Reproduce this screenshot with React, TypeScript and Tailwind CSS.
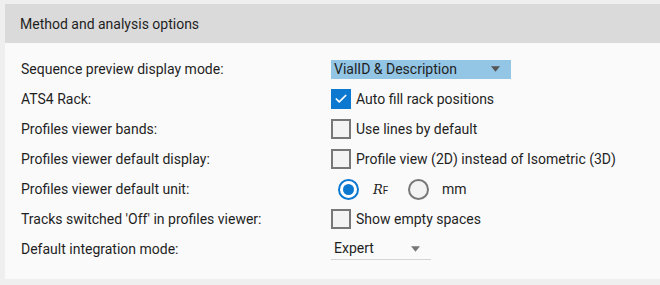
import { Check } from "lucide-react"

type Row = { label: string; control: React.ReactNode }

function Checkbox({ checked, label }: { checked?: boolean; label: string }) {
  return (
    <div className="flex items-center gap-[5px]">
      {checked ? (
        <span className="flex h-[20px] w-[20px] items-center justify-center bg-[#0c78cf]">
          <Check className="h-[14px] w-[14px] text-white" strokeWidth={3} />
        </span>
      ) : (
        <span className="h-[20px] w-[20px] border-2 border-[#777777] bg-[#f3f3f3]" />
      )}
      <span>{label}</span>
    </div>
  )
}

function Radio({ checked }: { checked?: boolean }) {
  return checked ? (
    <span className="flex h-[21px] w-[21px] items-center justify-center rounded-full border-2 border-[#0c78cf] bg-white">
      <span className="h-[11px] w-[11px] rounded-full bg-[#0c78cf]" />
    </span>
  ) : (
    <span className="h-[21px] w-[21px] rounded-full border-2 border-[#777777] bg-[#f3f3f3]" />
  )
}

function Caret({ className }: { className?: string }) {
  return (
    <svg viewBox="0 0 10 6" className={className}>
      <path d="M0 0 L10 0 L5 6 Z" fill="currentColor" />
    </svg>
  )
}

export default function App() {
  const rows: Row[] = [
    {
      label: "Sequence preview display mode:",
      control: (
        <div className="flex h-[19px] w-[180px] items-center justify-between bg-[#93c5e5] pl-[3px] pr-[11px]">
          <span>VialID &amp; Description</span>
          <Caret className="h-[6px] w-[9px] text-[#555555]" />
        </div>
      ),
    },
    { label: "ATS4 Rack:", control: <Checkbox checked label="Auto fill rack positions" /> },
    { label: "Profiles viewer bands:", control: <Checkbox label="Use lines by default" /> },
    { label: "Profiles viewer default display:", control: <Checkbox label="Profile view (2D) instead of Isometric (3D)" /> },
    {
      label: "Profiles viewer default unit:",
      control: (
        <div className="flex items-center pl-[7px]">
          <Radio checked />
          <span className="ml-[14px] w-[35px]">
            <i className="font-['DejaVu_Serif',serif] text-[13px]">R</i>
            <span className="text-[10px]">F</span>
          </span>
          <Radio />
          <span className="ml-[13px]">mm</span>
        </div>
      ),
    },
    { label: "Tracks switched 'Off' in profiles viewer:", control: <Checkbox label="Show empty spaces" /> },
    {
      label: "Default integration mode:",
      control: (
        <div className="flex h-[21px] w-[100px] items-center justify-between border-b border-[#d4d4d4] pl-[3px] pr-[11px]">
          <span>Expert</span>
          <Caret className="h-[6px] w-[9px] text-[#777777]" />
        </div>
      ),
    },
  ]

  return (
    <div className="h-[285px] w-[660px] overflow-hidden bg-[#efefef] pl-[5px] pt-[4px] font-['Roboto',sans-serif] text-[14px] text-[#1f1f1f]">
      <div className="flex h-[39px] items-center bg-[#dadada] pl-[15px] pt-[2px]">Method and analysis options</div>
      <div className="h-[236px] bg-[#fafafa] pl-[16px] pt-[11px]">
        {rows.map((r) => (
          <div key={r.label} className="flex h-[30px] items-center">
            <div className="w-[310px]">{r.label}</div>
            <div>{r.control}</div>
          </div>
        ))}
      </div>
    </div>
  )
}
